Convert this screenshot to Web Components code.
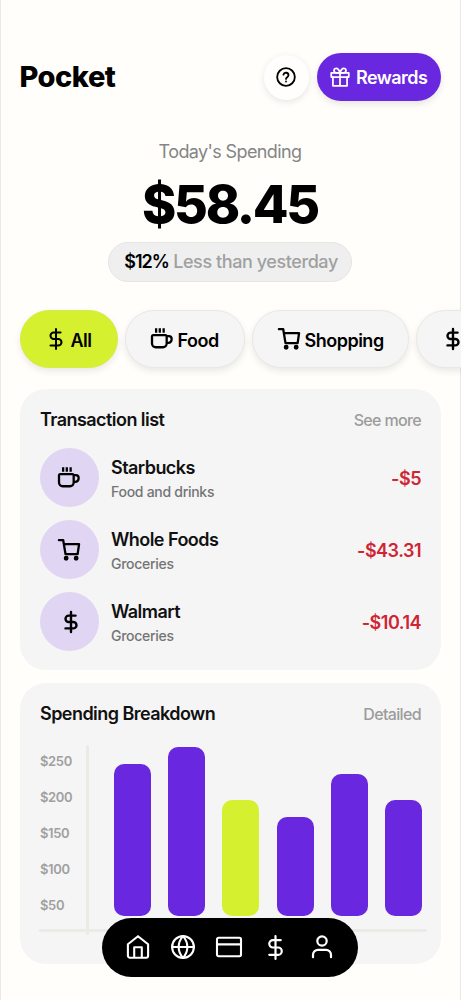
<!DOCTYPE html>
<html lang="en">
<head>
<meta charset="utf-8">
<title>Pocket</title>
<style>
html,body{margin:0;height:100%;overflow:hidden;background:#fffefb}
body{font-family:Inter,"Liberation Sans",sans-serif;color:#000}
</style>
</head>
<body>
<pocket-app></pocket-app>
<script>
const define=(name,html,setup)=>{
  const t=document.createElement('template');
  t.innerHTML=html;
  customElements.define(name,class extends HTMLElement{
    constructor(){super();this.attachShadow({mode:'open'}).append(t.content.cloneNode(true));}
    connectedCallback(){if(setup)setup(this,this.shadowRoot);}
  });
};

const ICONS={
  help:'<circle cx="12" cy="12" r="10.6"/><path d="M8.9 9.2a3.1 3.1 0 0 1 6.1.8c0 2-3 2.5-3 4.300"/><path d="M12 17.400v.1"/>',
  gift:'<rect x="1.500" y="7" width="21" height="5"/><path d="M3.500 12v10.500h17V12M12 7v15M12 7H7.500a2.700 2.700 0 1 1 0-5.400C11 1.600 12 7 12 7zM12 7h4.500a2.700 2.700 0 1 0 0-5.400C13 1.600 12 7 12 7z"/>',
  dollar:'<path d="M12 1v22M17 5H9.500a3.500 3.500 0 0 0 0 7h5a3.500 3.500 0 0 1 0 7H6"/>',
  cup:'<path stroke-linecap="butt" d="M5.600 .3v5M9.600 .3v5M13.800 .3v5"/><path d="M2.600 7.700h13a1.500 1.500 0 0 1 1.500 1.500V17a4 4 0 0 1-4 4H5.100a4 4 0 0 1-4-4V9.200a1.500 1.500 0 0 1 1.500-1.500zM17.100 8.800h2.400a3 3 0 0 1 3 3v.8a3.600 3.600 0 0 1-3.600 3.600h-1.800"/>',
  cart:'<path d="M1 1.300h4.700L8.200 16.500h13.200L23 5.500H6.500"/><circle cx="8.900" cy="21" r="1.400"/><circle cx="19.800" cy="21" r="1.400"/>',
  home:'<path d="M1.900 9.200 12 1.200l10.100 8v11.500a2 2 0 0 1-2 2H3.900a2 2 0 0 1-2-2zM8.200 22.500V12.200h7.600v10.300"/>',
  globe:'<circle cx="12" cy="12" r="10.900"/><path d="M1.100 12h21.800M12 1.100c-5.800 6.500-5.800 15.300 0 21.800M12 1.100c5.800 6.500 5.800 15.300 0 21.800"/>',
  card:'<rect x="0" y="2.800" width="24" height="18.400" rx="1.600"/><path d="M0 9.400h24"/>',
  user:'<circle cx="12" cy="6" r="4.700"/><path d="M3 22.200v-2.400a5 5 0 0 1 5-5h8a5 5 0 0 1 5 5v2.400"/>'
};
define('pk-icon',`<style>:host{display:block;flex:none;width:var(--s,22px);height:var(--s,22px)}
svg{display:block;width:100%;height:100%;overflow:visible;fill:none;stroke:currentColor;stroke-width:var(--w,2.500);stroke-linecap:round;stroke-linejoin:round}</style><svg viewBox="0 0 24 24"></svg>`,
(h,r)=>{r.querySelector('svg').innerHTML=ICONS[h.getAttribute('name')];});

define('pk-header',`<style>
:host{display:flex;align-items:center;height:48px;padding:0 20px 0 19.500px}
h1{margin:0;flex:1;font-size:29px;font-weight:800;letter-spacing:-.5px;line-height:48px}
.help,.rew{display:flex;align-items:center;box-sizing:border-box}
.help{width:45px;height:45px;border-radius:50%;justify-content:center;background:#fffefd;box-shadow:0 2px 7px #0000001a;margin-right:8px}
.help pk-icon{margin-right:1px}
.rew{width:124px;height:47.500px;border-radius:24px;background:#6927e0;color:#fff;padding-left:13px;gap:6px;font-size:18px;font-weight:600;letter-spacing:-.55px;box-shadow:0 3px 7px #0000001a}
</style><h1>Pocket</h1><div class="help"><pk-icon name="help" style="--s:20px;--w:2.200"></pk-icon></div><div class="rew"><pk-icon name="gift" style="--s:20px;--w:2.100"></pk-icon><span>Rewards</span></div>`);

define('pk-summary',`<style>
:host{display:flex;flex-direction:column;align-items:center;padding:39px 1px 0 0}
.l{font-size:18px;line-height:24px;color:#858585;letter-spacing:-.62px}
.v{font-size:52px;line-height:62px;font-weight:800;letter-spacing:-2.300px;margin-top:10px}
.p{box-sizing:border-box;width:244px;height:40px;border:1.500px solid #e5e5e2;border-radius:20px;background:#efefef;margin-top:5.500px;display:flex;justify-content:center;align-items:center;font-size:18px;font-weight:500;letter-spacing:-.42px;color:#a0a0a0;white-space:pre}
.p span{margin-left:2px}
b{font-weight:600;letter-spacing:-1px;color:#000}
</style><div class="l">Today's Spending</div><div class="v">$58.45</div><div class="p"><span><b>$12%</b> Less than yesterday</span></div>`);

define('pk-chip',`<style>
:host{box-sizing:border-box;flex:none;display:flex;align-items:center;height:58px;border-radius:29px;border:1.500px solid #e8e8e4;background:#f5f5f5;box-shadow:0 3px 7px #00000017;font-size:18px;font-weight:600;letter-spacing:-.5px;padding-left:24.500px;gap:5px}
:host([active]){background:#d5f02f;border-color:#d5ec4a;gap:4px;padding-left:23.500px}
span{padding-top:2px}
</style><slot name="icon"></slot><span><slot></slot></span>`);

define('pk-card',`<style>
:host{display:block;box-sizing:border-box;height:281px;margin:0 20px;border-radius:26px;background:#f5f5f5;padding:0 20px}
header{display:flex;justify-content:space-between;align-items:center;height:61px}
h2{margin:0;font-size:18px;font-weight:600;letter-spacing:-.55px;color:#111}
span{font-size:16px;font-weight:500;letter-spacing:-.65px;color:#9c9c9c}
</style><header><h2></h2><span></span></header><slot></slot>`,
(h,r)=>{r.querySelector('h2').textContent=h.getAttribute('heading');r.querySelector('span').textContent=h.getAttribute('link');});

define('pk-row',`<style>
:host{display:flex;align-items:center;height:59px;margin-bottom:13px}
.c{width:59px;height:59px;border-radius:50%;background:#e0d5f3;display:flex;align-items:center;justify-content:center;margin-right:12px}
.c ::slotted(pk-icon){margin-right:1px}
.t{flex:1;padding-top:5px}
.n{font-size:18px;font-weight:600;line-height:24px;letter-spacing:-.55px;color:#111}
.s{font-size:14px;font-weight:500;line-height:24px;letter-spacing:-.28px;color:#747474}
.a{font-size:18px;font-weight:600;letter-spacing:-.5px;color:#cf2433;padding-top:1px}
</style><div class="c"><slot name="icon"></slot></div><div class="t"><div class="n"></div><div class="s"></div></div><div class="a"><slot></slot></div>`,
(h,r)=>{r.querySelector('.n').textContent=h.getAttribute('name');r.querySelector('.s').textContent=h.getAttribute('kind');});

define('pk-chart',`<style>
:host{display:grid;grid-template-columns:47px 3px 1fr;grid-template-rows:184px 3px 3px;margin:1px -6px 0 -1px}
.y{grid-area:1/1;padding-left:1px;margin-top:-2px;font-size:13px;font-weight:600;letter-spacing:-.35px;color:#a0a0a0}
.y div{height:36px;line-height:36px}
.v{grid-area:1/2/4/3;background:#eaeae7;border-radius:2px}
.h{grid-area:2/1/3/4;background:#eaeae7;border-radius:2px}
.b{grid-area:1/3;display:flex;justify-content:space-between;align-items:flex-end;padding:0 5px 13px 25px}
.b i{width:37px;border-radius:10px;background:#6927e0}
.b i.on{background:#d5f02f}
</style><div class="y"><div>$250</div><div>$200</div><div>$150</div><div>$100</div><div>$50</div></div><div class="v"></div><div class="h"></div>
<div class="b"><i style="height:152px"></i><i style="height:169px"></i><i class="on" style="height:116.500px"></i><i style="height:99.500px"></i><i style="height:142px"></i><i style="height:116.500px"></i></div>`);

define('pk-nav',`<style>
:host{position:absolute;left:101.500px;bottom:23.500px;box-sizing:border-box;width:256.500px;height:59px;border-radius:30px;background:#000;color:#fff;display:flex;align-items:center;justify-content:space-between;padding:0 24px}
</style><pk-icon name="home" style="--s:24px;--w:2.100"></pk-icon><pk-icon name="globe" style="--s:24px;--w:2.100"></pk-icon><pk-icon name="card" style="--s:24px;--w:2.100"></pk-icon><pk-icon name="dollar" style="--s:25px;--w:2.100"></pk-icon><pk-icon name="user" style="--s:24px;--w:2.200"></pk-icon>`);

define('pocket-app',`<style>
:host{display:block;position:relative;box-sizing:border-box;width:461px;height:1000px;overflow:hidden;padding-top:53px;background:#fffefb;box-shadow:inset 1px 0 #e9e9e9,inset -1px 0 #e9e9e9}
.chips{display:flex;gap:7px;padding:28.500px 0 0 20px;margin-bottom:21px}
pk-card+pk-card{margin-top:13px}
pk-row:first-child{margin-top:-2px}
</style>
<pk-header></pk-header>
<pk-summary></pk-summary>
<div class="chips">
<pk-chip active style="width:98px"><pk-icon slot="icon" name="dollar" style="--w:2.200"></pk-icon>All</pk-chip>
<pk-chip style="width:120px"><pk-icon slot="icon" name="cup"></pk-icon>Food</pk-chip>
<pk-chip style="width:157px"><pk-icon slot="icon" name="cart"></pk-icon>Shopping</pk-chip>
<pk-chip style="width:120px"><pk-icon slot="icon" name="dollar" style="--w:2.600"></pk-icon></pk-chip>
</div>
<pk-card heading="Transaction list" link="See more">
<pk-row name="Starbucks" kind="Food and drinks"><pk-icon slot="icon" name="cup"></pk-icon>-$5</pk-row>
<pk-row name="Whole Foods" kind="Groceries"><pk-icon slot="icon" name="cart"></pk-icon>-$43.31</pk-row>
<pk-row name="Walmart" kind="Groceries"><pk-icon slot="icon" name="dollar" style="--w:2.600;margin-left:4px"></pk-icon>-$10.14</pk-row>
</pk-card>
<pk-card heading="Spending Breakdown" link="Detailed"><pk-chart></pk-chart></pk-card>
<pk-nav></pk-nav>`);
</script>
</body>
</html>
